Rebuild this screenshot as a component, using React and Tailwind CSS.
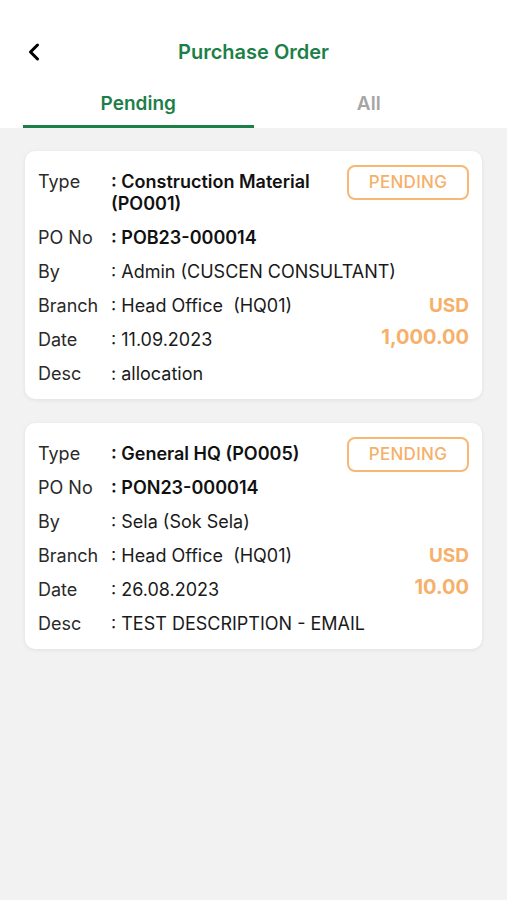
import { ChevronLeft } from 'lucide-react'

const ORDERS = [
  {
    type: ': Construction Material (PO001)',
    poNo: ': POB23-000014',
    by: ': Admin (CUSCEN CONSULTANT)',
    branch: ': Head Office\u00a0 (HQ01)',
    date: ': 11.09.2023',
    desc: ': allocation',
    currency: 'USD',
    amount: '1,000.00',
  },
  {
    type: ': General HQ (PO005)',
    poNo: ': PON23-000014',
    by: ': Sela (Sok Sela)',
    branch: ': Head Office\u00a0 (HQ01)',
    date: ': 26.08.2023',
    desc: ': TEST DESCRIPTION - EMAIL',
    currency: 'USD',
    amount: '10.00',
  },
]

const Row = ({ label, value, bold, aside }) => (
  <div className="flex items-center">
    <span className="w-[73px] shrink-0 text-[#2a2a2a]">{label}</span>
    <span className={bold ? 'font-semibold text-[#111]' : 'text-[#1a1a1a]'}>{value}</span>
    {aside}
  </div>
)

const Amount = ({ children, className }) => (
  <span className={`ml-auto font-bold text-[#f6b06a] ${className}`}>{children}</span>
)

const OrderCard = ({ order }) => (
  <div className="relative rounded-[10px] bg-white px-[13px] pt-[20px] pb-[14px] shadow-[0_1px_4px_rgba(0,0,0,0.08)]">
    <div className="absolute top-[14px] right-[13px] flex h-[35px] w-[122px] items-center justify-center rounded-[8px] border-2 border-[#f8b874] text-[17px] font-medium tracking-[0.3px] text-[#f6b06a]">
      PENDING
    </div>
    <div className="flex flex-col gap-[12px] text-[18px] leading-[22px]">
      <div className="flex">
        <span className="w-[73px] shrink-0 text-[#2a2a2a]">Type</span>
        <span className="max-w-[215px] font-semibold text-[#111]">{order.type}</span>
      </div>
      <Row label="PO No" value={order.poNo} bold />
      <Row label="By" value={order.by} />
      <Row
        label="Branch"
        value={order.branch}
        aside={<Amount className="text-[19px]">{order.currency}</Amount>}
      />
      <Row
        label="Date"
        value={order.date}
        aside={<Amount className="-mt-[6px] text-[20px]">{order.amount}</Amount>}
      />
      <Row label="Desc" value={order.desc} />
    </div>
  </div>
)

const App = () => {
  return (
    <div className="min-h-[900px] bg-[#f2f2f2]" style={{ fontFamily: 'Inter, "Liberation Sans", sans-serif' }}>
      <header className="bg-white">
        <div className="relative flex h-[40px] translate-y-[32px] items-center justify-center">
          <ChevronLeft className="absolute left-[20px] h-[28px] w-[28px] text-black" strokeWidth={2.6} />
          <h1 className="text-[20px] font-semibold text-[#1d7f48]">Purchase Order</h1>
        </div>
        <div className="flex h-[88px] items-end px-[23px]">
          <div className="flex flex-1 flex-col items-center">
            <span className="pb-[9px] text-[19px] font-semibold leading-[24px] text-[#1d7f48]">Pending</span>
            <div className="h-[3px] w-full bg-[#1d7f48]" />
          </div>
          <div className="flex flex-1 flex-col items-center">
            <span className="pb-[9px] text-[19px] font-semibold leading-[24px] text-[#a6a6a6]">All</span>
            <div className="h-[3px] w-full bg-transparent" />
          </div>
        </div>
      </header>
      <main className="flex flex-col gap-[24px] px-[25px] pt-[23px]">
        {ORDERS.map((order) => (
          <OrderCard key={order.poNo} order={order} />
        ))}
      </main>
    </div>
  )
}

export default App
